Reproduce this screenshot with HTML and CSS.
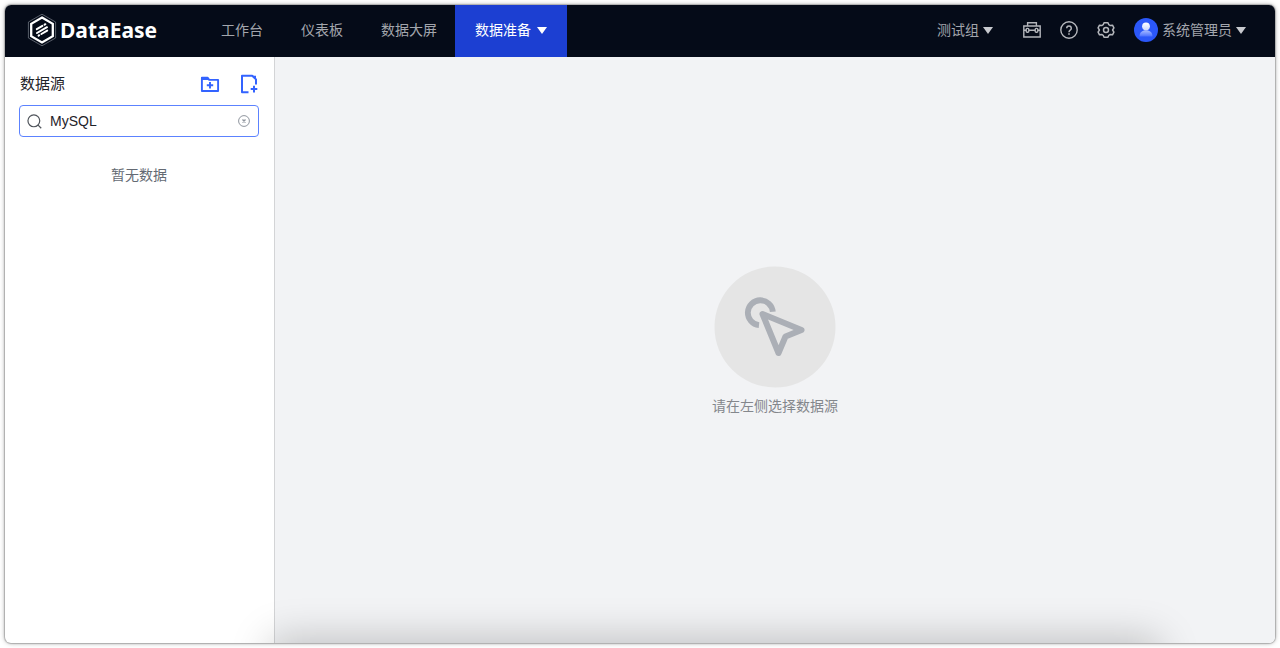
FILE: index.html
```html
<!DOCTYPE html>
<html lang="zh-CN">
<head>
<meta charset="utf-8">
<meta name="viewport" content="width=device-width, initial-scale=1">
<title>DataEase</title>
<link rel="stylesheet" href="styles.css">
</head>
<body>
<div class="window">
  <header class="topbar">
    <a class="brand" href="#">
      <svg class="brand-mark" viewBox="0 0 30 34" fill="none" aria-hidden="true">
        <path d="M15 1.2 28.6 9v16L15 32.8 1.4 25V9Z" stroke="#7d828c" stroke-width=".7"/>
        <path d="M15 4.6 25.8 10.8v12.4L15 29.4 4.2 23.2V10.8Z" stroke="#fff" stroke-width="2.3"/>
        <path d="m9.8 16.2 5.6-3.3M17.6 11.7l.8-.5M10 20l10-5.8M11.6 22.6l.6-.4M14.4 21l5.800-3.400" stroke="#fff" stroke-width="2" stroke-linecap="round"/>
      </svg>
      <span>DataEase</span>
    </a>
    <nav class="nav">
      <a class="nav-item" href="#">工作台</a>
      <a class="nav-item" href="#">仪表板</a>
      <a class="nav-item" href="#">数据大屏</a>
      <a class="nav-item active" href="#">数据准备<span class="caret"></span></a>
    </nav>
    <div class="tools">
      <button class="menu org" type="button">测试组<span class="caret"></span></button>
      <button class="tool" type="button" aria-label="工具箱">
        <svg viewBox="0 0 18 18" fill="none" stroke="currentColor" stroke-width="1.4" aria-hidden="true">
          <path d="M4.6 5V1.8h8.8V5M.8 5h16.4v11H.8ZM.8 9.300h2.400M6 9.300h6M14.800 9.300h2.400"/>
          <rect x="3.2" y="7.4" width="2.6" height="3.8" rx="1"/>
          <rect x="12.2" y="7.4" width="2.6" height="3.8" rx="1"/>
        </svg>
      </button>
      <button class="tool" type="button" aria-label="帮助">
        <svg viewBox="0 0 18 18" fill="none" stroke="currentColor" stroke-width="1.4" aria-hidden="true">
          <circle cx="9" cy="9" r="8.2"/>
          <path d="M6.7 7.200a2.300 2.300 0 1 1 3.500 2C9.300 9.800 9 10.100 9 11.200" stroke-width="1.500"/>
          <path d="M9 12.300v1.400" stroke-width="1.600"/>
        </svg>
      </button>
      <button class="tool" type="button" aria-label="设置">
        <svg viewBox="0 0 18 18" fill="none" stroke="currentColor" stroke-width="1.5" stroke-linejoin="round" aria-hidden="true">
          <path d="M7 1.700h4l.8 2 1.500.9 2.200-.4 1.400 2.600L15.600 9l1.300 2.200-1.400 2.600-2.200-.4-1.500.9-.8 2H7l-.8-2-1.500-.9-2.200.4-1.400-2.600L2.400 9 1.100 6.800l1.400-2.600 2.200.4 1.500-.9Z"/>
          <circle cx="9" cy="9" r="2.500"/>
        </svg>
      </button>
      <button class="menu user" type="button">
        <svg class="avatar" viewBox="0 0 24 24" aria-hidden="true">
          <defs>
            <linearGradient id="body" x1="0" y1="0" x2="0" y2="1">
              <stop offset="0" stop-color="#a9bdff"/>
              <stop offset="1" stop-color="#4a70ff"/>
            </linearGradient>
            <linearGradient id="head" x1="0" y1="0" x2="0" y2="1">
              <stop offset="0" stop-color="#fff"/>
              <stop offset="1" stop-color="#cdd8ff"/>
            </linearGradient>
          </defs>
          <circle cx="12" cy="12" r="12" fill="#2b57f8"/>
          <path d="M5.500 18.500c0-4 2.500-6.300 6.500-6.300s6.500 2.300 6.500 6.300Z" fill="url(#body)"/>
          <circle cx="12" cy="8.300" r="3.900" fill="url(#head)"/>
        </svg>
        系统管理员<span class="caret"></span>
      </button>
    </div>
  </header>
  <div class="content">
    <aside class="sidebar">
      <div class="sidebar-head">
        <h1 class="title">数据源</h1>
        <div class="actions">
          <button class="action" type="button" aria-label="新建文件夹">
            <svg viewBox="0 0 20 20" fill="none" stroke="currentColor" stroke-width="1.900" aria-hidden="true">
              <path d="M1.900 17V3.600h5.600l1.700 2.300h8.900V17Z" stroke-linejoin="round"/>
              <path d="M2 3.200h5.500l1.700 2.700H2Z" fill="currentColor" stroke="none"/>
              <path d="M10 8.100v6.400M6.800 11.300h6.400"/>
            </svg>
          </button>
          <button class="action" type="button" aria-label="新建数据源">
            <svg viewBox="0 0 20 20" fill="none" stroke="currentColor" stroke-width="2" aria-hidden="true">
              <path d="M9.500 18.300H3V1.700h10.200L17 5.400v5.200" stroke-linejoin="round"/>
              <path d="M12.500 1.700 17 6V1.700Z" fill="currentColor" stroke="none"/>
              <path d="M15 11.800v6.600M11.700 15.100h6.600"/>
            </svg>
          </button>
        </div>
      </div>
      <div class="search">
        <svg class="search-icon" viewBox="0 0 16 16" fill="none" stroke="currentColor" stroke-width="1.300" aria-hidden="true">
          <circle cx="7.300" cy="7.300" r="6.300"/>
          <path d="m11.800 11.800 3.400 3.400"/>
        </svg>
        <input class="search-input" type="text" value="MySQL" aria-label="搜索">
        <button class="clear" type="button" aria-label="清空">
          <svg viewBox="0 0 12 12" fill="none" stroke="currentColor" aria-hidden="true">
            <circle cx="6" cy="6" r="5.400"/>
            <path d="m4.500 4.500 3 3m0-3-3 3" stroke-width="1.400"/>
          </svg>
        </button>
      </div>
      <p class="no-data">暂无数据</p>
    </aside>
    <main class="main">
      <svg class="pick" viewBox="0 0 122 122" fill="none" stroke="#abafb6" aria-hidden="true">
        <circle cx="61" cy="61" r="60.500" fill="#e5e5e5" stroke="none"/>
        <path d="M58.800 45.800A12.500 12.500 0 1 0 45 59.200" stroke-width="5.800"/>
        <path d="M48.500 48 87.500 64 71.500 70.500 64.500 87Z" stroke-width="6" stroke-linejoin="round"/>
      </svg>
      <p class="hint">请在左侧选择数据源</p>
    </main>
  </div>
</div>
</body>
</html>
```
FILE: styles.css
```css
* {
  box-sizing: border-box;
}

body {
  margin: 0;
  padding: 5px;
  min-height: 100vh;
  display: flex;
  background: #fff;
  color: #1f2329;
  font: 14px/20px "Liberation Sans", "Noto Sans CJK SC", sans-serif;
}

button {
  padding: 0;
  border: 0;
  background: none;
  color: inherit;
  font: inherit;
  cursor: pointer;
}

a {
  color: inherit;
  text-decoration: none;
}

svg {
  display: block;
}

.window {
  position: relative;
  flex: 1;
  display: flex;
  flex-direction: column;
  overflow: hidden;
  border-radius: 6px;
  box-shadow: 0 0 1px 1px rgba(0, 0, 0, .2), 0 0 5px rgba(0, 0, 0, .35);
}

/* soft shade along the bottom edge */
.window::after {
  content: "";
  position: absolute;
  top: 100%;
  left: 270px;
  right: 120px;
  height: 40px;
  box-shadow: 0 0 40px 4px rgba(0, 0, 0, .22);
  pointer-events: none;
}

.topbar {
  display: flex;
  height: 52px;
  padding-right: 29px;
  background: #050b18;
  color: #a3a6ad;
}

.brand {
  width: 196px;
  padding: 0 0 2px 22px;
  display: flex;
  align-items: center;
  gap: 3px;
  color: #fff;
  font: 700 21px/28px "Noto Sans", sans-serif;
}

.brand-mark {
  width: 30px;
  height: 34px;
}

.nav {
  display: flex;
}

.nav-item {
  display: flex;
  align-items: center;
  gap: 6px;
  padding: 0 18px 2px 20px;
}

.nav-item.active {
  padding-right: 20px;
  background: #1c3fd2;
  color: #fff;
}

.caret {
  border: 5px solid transparent;
  border-top: 7px solid currentColor;
  border-bottom: 0;
}

.tools {
  margin-left: auto;
  display: flex;
  align-items: center;
  gap: 19px;
  padding-bottom: 2px;
}

.menu {
  display: flex;
  align-items: center;
  gap: 4px;
}

.org {
  margin-right: 11px;
}

.menu .caret {
  color: #c8cacf;
}

.tool svg {
  width: 18px;
  height: 18px;
  color: #b4b6bb;
}

.avatar {
  width: 24px;
  height: 24px;
}

.content {
  flex: 1;
  display: flex;
}

.sidebar {
  width: 270px;
  padding: 17px 15px 17px 14px;
  border-right: 1px solid #d3d4d6;
}

.sidebar-head {
  display: flex;
  align-items: center;
  justify-content: space-between;
  margin-bottom: 11px;
  padding-left: 1px;
}

.title {
  margin: 0;
  font-size: 15px;
  line-height: 20px;
  font-weight: 400;
}

.actions {
  display: flex;
  gap: 19px;
}

.action svg {
  width: 20px;
  height: 20px;
  color: #3363ff;
}

.search {
  display: flex;
  align-items: center;
  gap: 8px;
  height: 32px;
  padding: 0 8px 0 7px;
  border: 1px solid #5c82ff;
  border-radius: 4px;
}

.search-icon {
  flex: none;
  width: 15px;
  height: 15px;
  color: #51565d;
}

.search-input {
  flex: 1;
  min-width: 0;
  padding: 0;
  border: 0;
  outline: 0;
  background: none;
  color: inherit;
  font: inherit;
}

.clear svg {
  width: 12px;
  height: 12px;
  color: #8f959e;
}

.no-data {
  margin: 28px 0 0;
  color: #646a73;
  text-align: center;
}

.main {
  flex: 1;
  display: flex;
  flex-direction: column;
  align-items: center;
  justify-content: center;
  gap: 8px;
  padding-bottom: 18px;
  background: #f2f3f5;
}

.pick {
  width: 122px;
  height: 122px;
}

.hint {
  margin: 0;
  color: #84878c;
}
```
